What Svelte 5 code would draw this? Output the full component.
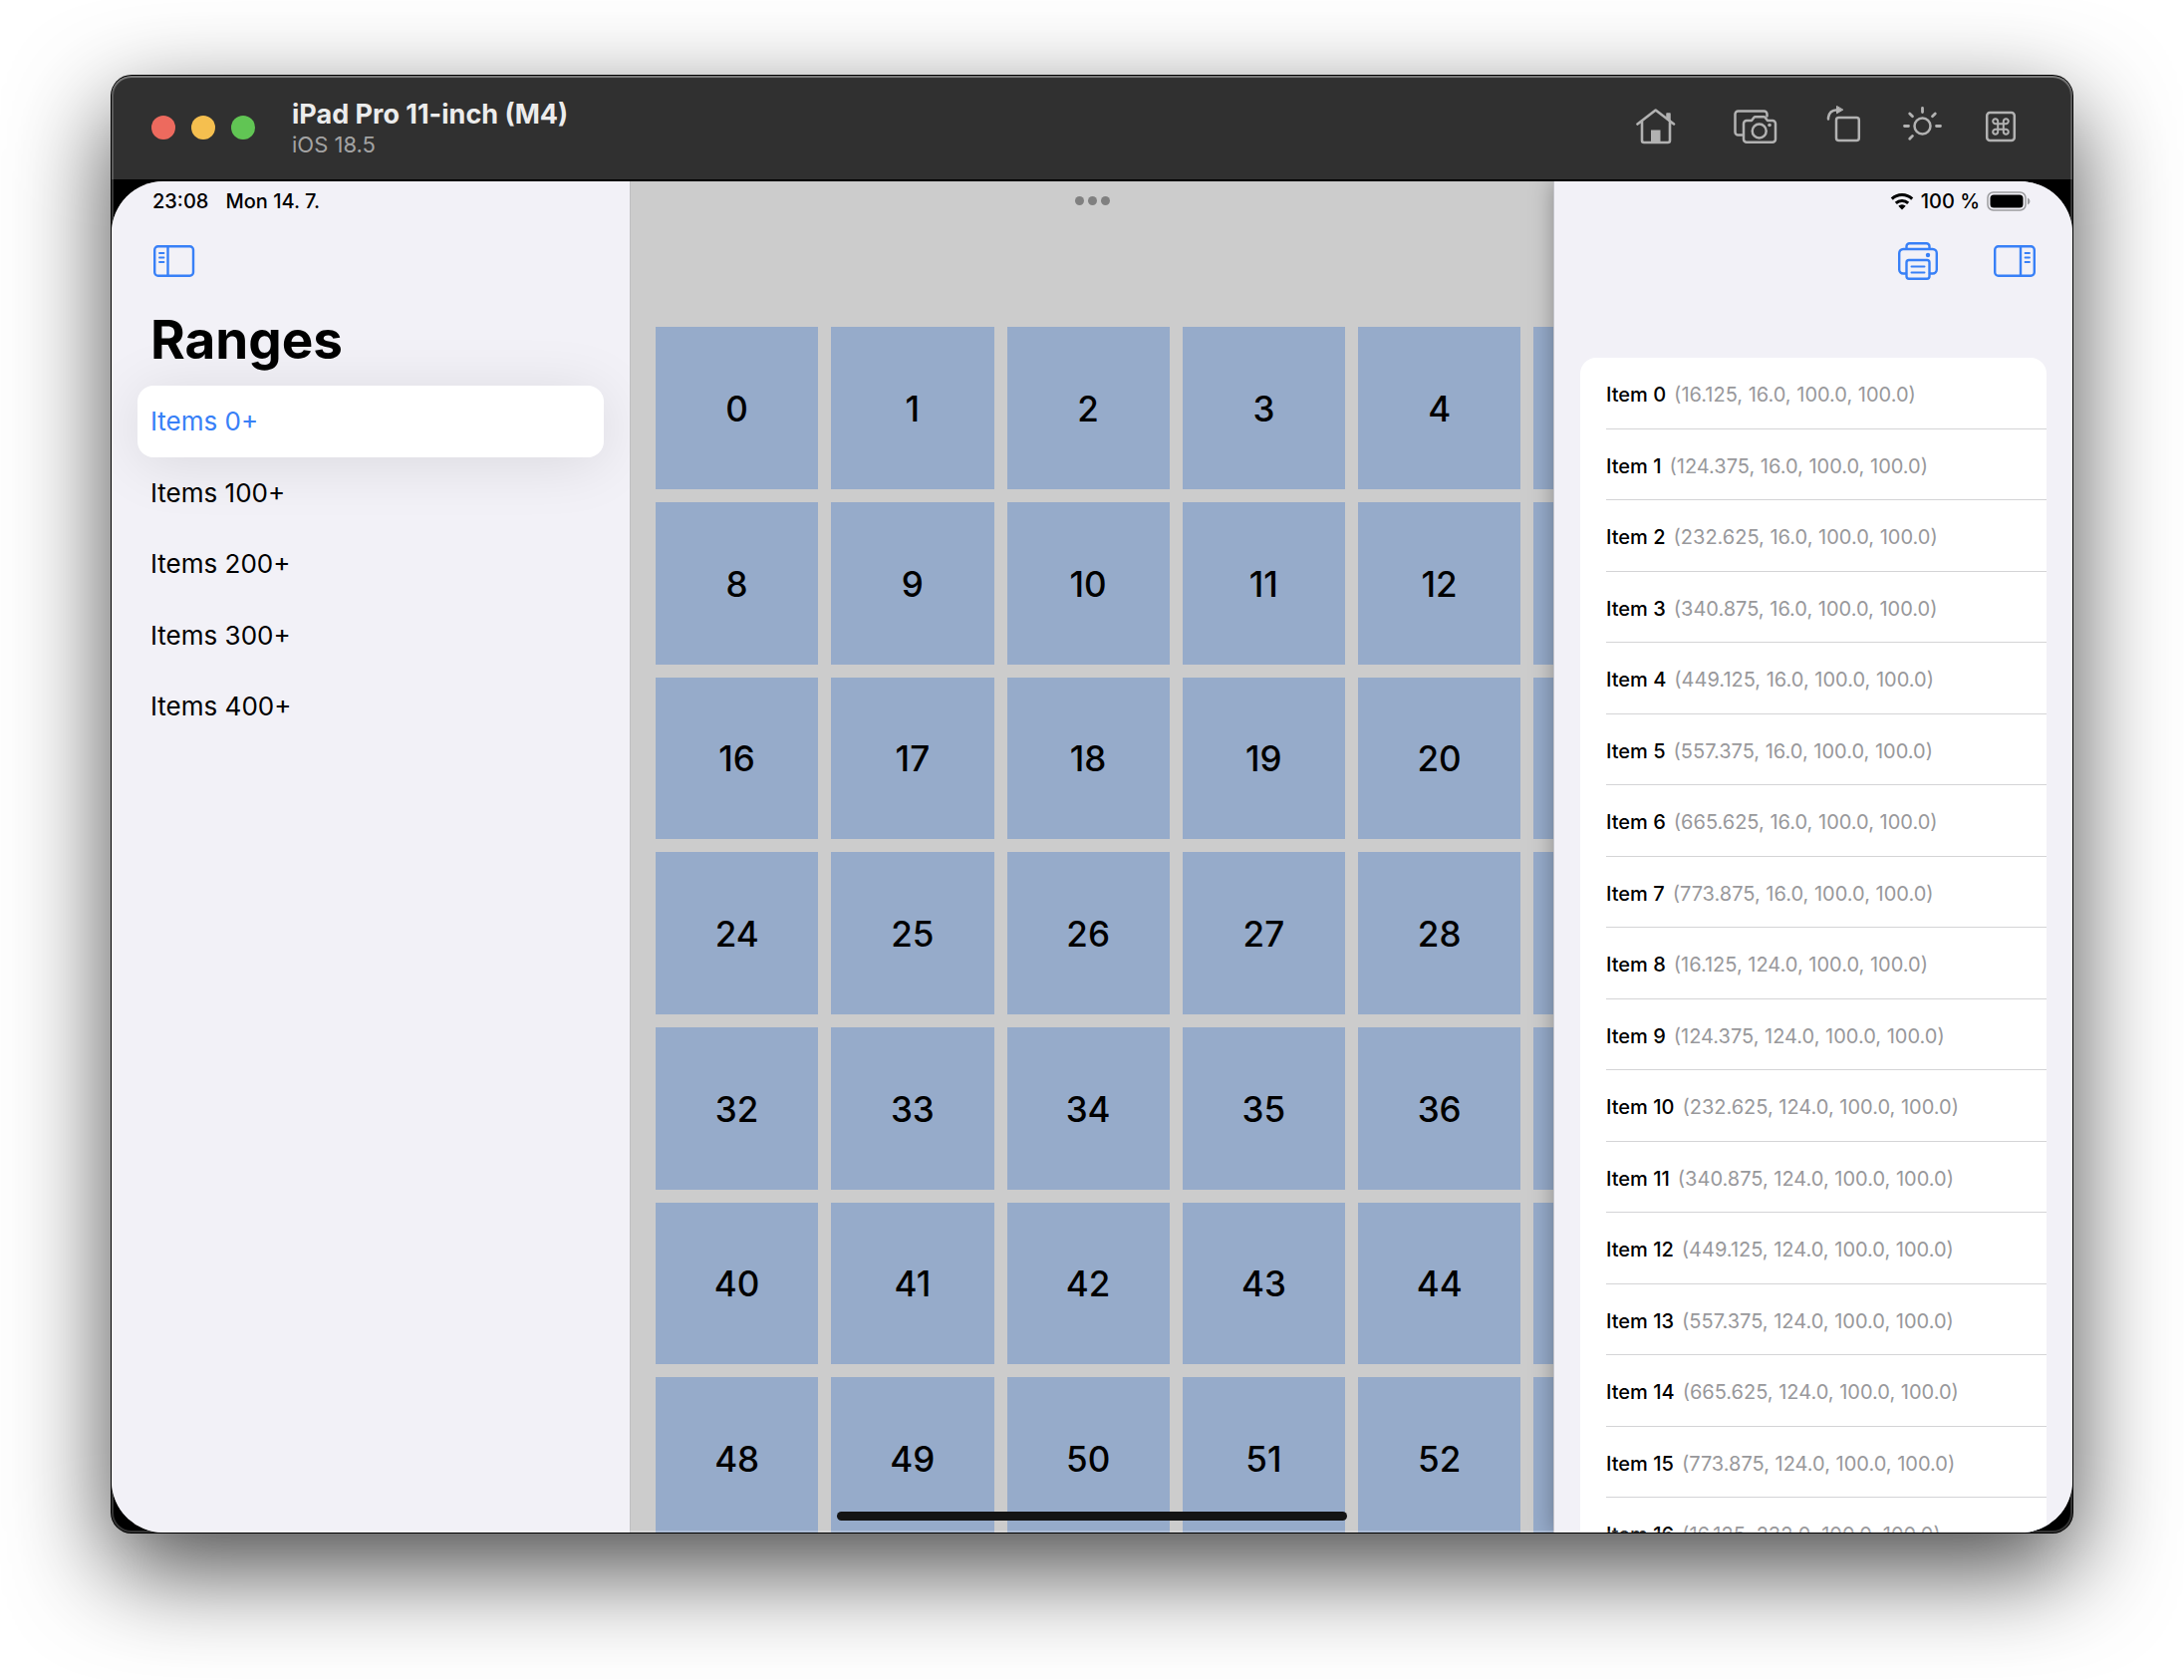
<script>
  const ranges = [0, 100, 200, 300, 400];
  let selected = $state(0);

  const columns = 8;
  // Columns past this one lie under the inspector and carry no label.
  const uncovered = 5;
  const tiles = Array.from({ length: columns * 7 }, (_, i) => i);

  const frames = Array.from({ length: 17 }, (_, i) => {
    const x = 16.125 + (i % columns) * 108.25;
    const y = 16 + Math.floor(i / columns) * 108;
    return { id: i, label: `(${x}, ${y.toFixed(1)}, 100.0, 100.0)` };
  });
</script>

<div class="desktop">
  <div class="window">
    <header class="titlebar">
      <div class="lights">
        <button class="light close" aria-label="Close"></button>
        <button class="light minimize" aria-label="Minimize"></button>
        <button class="light zoom" aria-label="Zoom"></button>
      </div>
      <div class="device">
        <h1>iPad Pro 11-inch (M4)</h1>
        <p>iOS 18.5</p>
      </div>
      <div class="tools">
        <button class="home" aria-label="Home">
          <svg width="40" height="44" viewBox="0 0 40 44" fill="none" stroke="currentColor" stroke-width="2.600" stroke-linejoin="round" stroke-linecap="round">
            <path d="M1.500 18.500 19.700 4.500 38 18.500M6 16v19a2 2 0 0 0 2 2h24a2 2 0 0 0 2-2V16" />
            <path d="M31 8h3v8l-3-2.500z" fill="currentColor" stroke-width="1.500" />
            <path d="M15 24.500h9.500V37H15z" fill="currentColor" stroke="none" />
          </svg>
        </button>
        <button aria-label="Screenshot">
          <svg width="46" height="44" viewBox="0 0 46 44" fill="none" stroke="currentColor" stroke-width="2.500" stroke-linejoin="round" stroke-linecap="round">
            <path d="M8.500 29.500H4.500a3 3 0 0 1-3-3v-18a3 3 0 0 1 3-3h26a3 3 0 0 1 3 3v2" />
            <path d="M13 15h5l2.500-3.200a1.500 1.500 0 0 1 1.200-.6h8.600a1.500 1.500 0 0 1 1.200.6L34 15h5a3 3 0 0 1 3 3v15.800a3 3 0 0 1-3 3H13a3 3 0 0 1-3-3V18a3 3 0 0 1 3-3z" />
            <circle cx="25.700" cy="25.500" r="7" />
            <circle cx="36" cy="19.500" r="1.800" fill="currentColor" stroke="none" />
          </svg>
        </button>
        <button aria-label="Rotate">
          <svg width="40" height="44" viewBox="0 0 40 44" fill="none" stroke="currentColor" stroke-width="2.500" stroke-linejoin="round" stroke-linecap="round">
            <rect x="15" y="12" width="22.800" height="23" rx="2.500" />
            <path d="M7 13.500V12q1-7.500 9-7.700" />
            <path d="M15.500.8v7l6-3.500z" fill="currentColor" stroke-width="1" />
          </svg>
        </button>
        <button aria-label="Appearance">
          <svg width="40" height="44" viewBox="0 0 40 44" fill="none" stroke="currentColor" stroke-width="2.800" stroke-linecap="round">
            <circle cx="19.500" cy="20.500" r="8" stroke-width="2.500" />
            <path d="M19.500 2.500v4M1.500 20.500h4M33.500 20.500h4M6.700 8l2.800 2.800M32.300 8l-2.800 2.800M6.700 33.300l2.800-2.900" />
          </svg>
        </button>
        <button aria-label="Keyboard shortcuts">
          <svg width="32" height="44" viewBox="0 0 32 44" fill="none" stroke="currentColor" stroke-width="2.500">
            <rect x="2.200" y="7" width="27.600" height="28" rx="3" />
            <path stroke-width="2" d="M13.200 18.200h5.600v5.600h-5.600zM13.200 18.200h-2.300a2.500 2.500 0 1 1 2.300-2.400zM18.800 18.200v-2.400a2.500 2.500 0 1 1 2.300 2.400zM18.800 23.800h2.300a2.500 2.500 0 1 1-2.300 2.400zM13.200 23.800v2.400a2.500 2.500 0 1 1-2.300-2.400z" />
          </svg>
        </button>
      </div>
    </header>

    <div class="screen">
      <aside class="sidebar">
        <div class="status">
          <span>23:08</span>
          <span>Mon 14. 7.</span>
        </div>
        <div class="toolbar">
          <button aria-label="Toggle sidebar">
            <svg width="42" height="32" viewBox="0 0 42 32" fill="none" stroke="currentColor" stroke-width="2.400" stroke-linecap="round">
              <rect x="1.200" y="1.200" width="38.800" height="29.600" rx="3.500" />
              <path d="M14.500 1.500v29" />
              <path stroke-width="1.800" d="M6 8h4.500M6 12.500h4.500M6 17h4.500" />
            </svg>
          </button>
        </div>
        <h2>Ranges</h2>
        <nav>
          {#each ranges as range}
            <a
              href="#items-{range}"
              class="row"
              class:active={selected === range}
              onclick={() => (selected = range)}>Items {range}+</a>
          {/each}
        </nav>
      </aside>

      <main class="canvas">
        {#each tiles as tile}
          <div class="tile">
            {#if tile % columns < uncovered}{tile}{/if}
          </div>
        {/each}
      </main>

      <button class="multitask" aria-label="Multitasking">
        <i></i><i></i><i></i>
      </button>
      <div class="indicator"></div>

      <aside class="inspector">
        <div class="status">
          <svg width="24" height="18" viewBox="0 0 24 18" fill="none" stroke="currentColor" stroke-width="3">
            <path d="M1.800 6.600a14.600 14.600 0 0 1 20.400 0" />
            <path d="M5.800 10.900a9 9 0 0 1 12.400 0" />
            <path d="M12 17.500 8.300 13.700a5.300 5.300 0 0 1 7.400 0z" fill="currentColor" stroke="none" />
          </svg>
          <span>100 %</span>
          <svg width="44" height="20" viewBox="0 0 44 20">
            <rect x="1" y="1" width="38" height="18" rx="5.500" fill="none" stroke="#9c9c9f" stroke-width="1.500" />
            <rect x="3.500" y="3.500" width="33" height="13" rx="3.500" />
            <path d="M41 6.500q2.500 1 2.500 3.500t-2.500 3.500z" fill="#9c9c9f" />
          </svg>
        </div>
        <div class="toolbar">
          <button aria-label="Print">
            <svg width="40" height="38" viewBox="0 0 40 38" fill="none" stroke="currentColor" stroke-width="2.400" stroke-linecap="round" stroke-linejoin="round">
              <path d="M8.500 6.500V4.200a3 3 0 0 1 3-3h17a3 3 0 0 1 3 3v2.300" />
              <path d="M8 31.500H5.200a4 4 0 0 1-4-4V11a4 4 0 0 1 4-4h29.600a4 4 0 0 1 4 4v16.500a4 4 0 0 1-4 4H32" />
              <rect x="8.500" y="18" width="23" height="18.800" rx="2.500" />
              <path stroke-width="2" d="M13.500 24.500h13M13.500 30.500h13" />
              <circle cx="30" cy="13" r="2.200" fill="currentColor" stroke="none" />
            </svg>
          </button>
          <button aria-label="Toggle inspector">
            <svg width="42" height="32" viewBox="0 0 42 32" fill="none" stroke="currentColor" stroke-width="2.400" stroke-linecap="round">
              <rect x="1.200" y="1.200" width="39.600" height="29.600" rx="3.500" />
              <path d="M27 1.500v29" />
              <path stroke-width="1.800" d="M31.500 8H36M31.500 12.500H36M31.500 17H36" />
            </svg>
          </button>
        </div>
        <ul>
          {#each frames as frame}
            <li class="row"><b>Item {frame.id}</b><span>{frame.label}</span></li>
          {/each}
        </ul>
      </aside>
    </div>
  </div>
</div>

<style>
  :global(body) {
    background: #fff;
  }

  .desktop {
    box-sizing: border-box;
    height: 100vh;
    padding: 76px 112px 148px;
    font-family: Inter, "Liberation Sans", sans-serif;
    color: #000;
    overflow: hidden;
  }

  h1,
  h2,
  p,
  ul {
    margin: 0;
    padding: 0;
  }

  button {
    display: flex;
    padding: 0;
    border: 0;
    background: none;
    color: inherit;
  }

  svg {
    display: block;
  }

  .window {
    position: relative;
    height: 100%;
    display: flex;
    flex-direction: column;
    border-radius: 20px;
    background: #000;
    box-shadow:
      0 0 0 1px #000,
      0 36px 100px rgba(0, 0, 0, 0.72);
  }

  .window::after {
    content: "";
    position: absolute;
    inset: 0;
    z-index: 2;
    border-radius: 20px;
    box-shadow:
      inset 0 0 0 2px rgba(255, 255, 255, 0.2),
      inset 0 2px 1px rgba(255, 255, 255, 0.2);
    pointer-events: none;
  }

  .titlebar {
    display: flex;
    align-items: center;
    height: 104px;
    padding: 0 56px 0 40px;
    border-radius: 20px 20px 0 0;
    background: #303030;
    margin-bottom: 2px;
  }

  .lights {
    display: flex;
    gap: 16px;
  }

  .light {
    width: 24px;
    height: 24px;
    border-radius: 50%;
  }

  .close {
    background: #ed6a5e;
  }

  .minimize {
    background: #f5bf4f;
  }

  .zoom {
    background: #61c554;
  }

  .device {
    margin-left: 37px;
  }

  h1 {
    font-size: 27px;
    line-height: 34px;
    font-weight: 700;
    color: #ececec;
  }

  .device p {
    font-size: 22px;
    line-height: 26px;
    color: #a3a3a3;
  }

  .tools {
    display: flex;
    gap: 42px;
    margin-left: auto;
    color: #b2b2b2;
  }

  .home {
    margin-right: 16px;
  }

  .screen {
    flex: 1;
    min-height: 0;
    display: grid;
    grid-template-columns: 520px minmax(0, 1fr) 520px;
    grid-template-rows: minmax(0, 1fr);
    border-radius: 52px;
    overflow: hidden;
    background: #ccc;
  }

  .sidebar,
  .inspector {
    grid-row: 1;
    overflow: hidden;
    background: #f2f1f7;
  }

  .sidebar {
    grid-column: 1;
  }

  .inspector {
    grid-column: 3;
    z-index: 1;
    box-shadow:
      -1px 0 0 #c3c3c9,
      0 0 22px rgba(0, 0, 0, 0.35);
  }

  .status {
    box-sizing: border-box;
    display: flex;
    align-items: center;
    height: 38px;
    padding: 2px 42px 0 41px;
    font-size: 20px;
    line-height: 24px;
    font-weight: 500;
  }

  .sidebar .status {
    gap: 17px;
  }

  .inspector .status {
    justify-content: flex-end;
    gap: 7px;
  }

  .toolbar {
    display: flex;
    align-items: center;
    height: 84px;
    padding: 0 37px 0 42px;
    color: #3880f7;
  }

  .inspector .toolbar {
    justify-content: flex-end;
    gap: 56px;
  }

  h2 {
    padding: 0 39px 8px;
    font-size: 53px;
    line-height: 75px;
    font-weight: 700;
  }

  nav {
    display: flex;
    flex-direction: column;
    padding: 0 26px;
  }

  .row {
    box-sizing: border-box;
    display: flex;
    align-items: center;
    height: 72px;
  }

  .row:nth-child(even) {
    height: 71px;
  }

  nav .row {
    padding: 0 13px;
    border-radius: 16px;
    font-size: 26px;
    line-height: 32px;
    color: #000;
    text-decoration: none;
  }

  nav .active {
    background: #fff;
    color: #3880f7;
    box-shadow: 0 6px 60px rgba(0, 0, 0, 0.1);
  }

  .canvas {
    grid-row: 1;
    grid-column: 2 / 4;
    overflow: hidden;
    display: grid;
    grid-template-columns: repeat(8, minmax(0, 1fr));
    grid-auto-rows: 163px 163px 162px;
    align-content: start;
    gap: 13px;
    padding: 146px 25px 0;
    border-left: 1px solid #bfbfc1;
  }

  .tile {
    display: flex;
    align-items: center;
    justify-content: center;
    background: #96abca;
    font-size: 35px;
    line-height: 42px;
    font-weight: 500;
  }

  .multitask,
  .indicator {
    grid-row: 1;
    grid-column: 2;
    justify-self: center;
  }

  .multitask {
    align-self: start;
    align-items: center;
    gap: 4px;
    height: 38px;
  }

  .multitask i {
    width: 9px;
    height: 9px;
    border-radius: 50%;
    background: #808080;
  }

  .indicator {
    align-self: end;
    width: 512px;
    height: 9px;
    margin-bottom: 12px;
    border-radius: 5px;
    background: #141414;
  }

  ul {
    margin: 55px 26px 0;
    padding-left: 26px;
    border-radius: 16px 16px 0 0;
    background: #fff;
    list-style: none;
  }

  li.row {
    gap: 8px;
    padding-top: 3px;
    border-bottom: 1px solid #d4d4d6;
    font-size: 20px;
    line-height: 24px;
  }

  li b {
    font-weight: 500;
  }

  li span {
    color: #98989b;
  }
</style>
